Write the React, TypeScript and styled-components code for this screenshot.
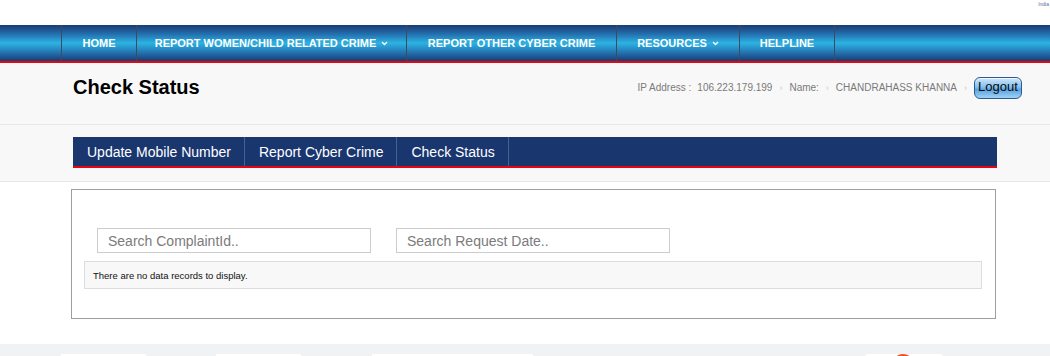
import React from "react";
import styled, { createGlobalStyle } from "styled-components";

const GlobalStyle = createGlobalStyle`
  html, body {
    margin: 0;
    padding: 0;
    background: #ffffff;
    font-family: "Liberation Sans", Arial, sans-serif;
  }
`;

const Page = styled.div`
  width: 1050px;
  height: 356px;
  overflow: hidden;
`;

const TopStrip = styled.div`
  height: 25px;
  display: flex;
  justify-content: flex-end;
  align-items: flex-start;
`;

const TinyLabel = styled.span`
  font-size: 5px;
  line-height: 8px;
  color: #5a6f95;
  margin-right: 1px;
`;

const NavBar = styled.nav`
  height: 36px;
  border-bottom: 2px solid #e30613;
  background: linear-gradient(
    to bottom,
    #1c3a72 0%,
    #236fae 25%,
    #2cb3e3 50%,
    #236fae 78%,
    #1c3a72 100%
  );
  display: flex;
  padding-left: 61px;
`;

const NavItem = styled.a<{ $w: number; $last?: boolean }>`
  display: flex;
  align-items: center;
  justify-content: center;
  gap: 5px;
  width: ${(p) => p.$w}px;
  box-sizing: border-box;
  border-left: 1px solid #3d4b5f;
  border-right: ${(p) => (p.$last ? "1px solid #3d4b5f" : "none")};
  color: #ffffff;
  font-size: 11px;
  font-weight: bold;
  text-transform: uppercase;
  text-decoration: none;
  white-space: nowrap;
`;

const Chevron = () => (
  <svg width="7" height="5" viewBox="0 0 7 5">
    <polyline
      points="1,1 3.5,3.5 6,1"
      fill="none"
      stroke="#ffffff"
      strokeWidth="1.3"
    />
  </svg>
);

const HeaderBand = styled.div`
  background: #f8f8f8;
  border-bottom: 1px solid #e8e8e8;
  height: 61px;
`;

const HeaderInner = styled.div`
  height: 49px;
  display: flex;
  align-items: center;
  justify-content: space-between;
  padding: 0 28px 0 73px;
`;

const Title = styled.h1`
  margin: 0;
  font-size: 20px;
  font-weight: bold;
  color: #000000;
`;

const UserInfo = styled.div`
  display: flex;
  align-items: center;
  font-size: 10px;
  color: #7a7a7a;
`;

const InfoText = styled.span<{ $gap?: number }>`
  margin-left: ${(p) => p.$gap ?? 0}px;
`;

const Sep = styled.span`
  color: #c8c8c8;
  font-size: 9px;
  margin: 0 7px;
`;

const LogoutButton = styled.button`
  width: 48px;
  height: 22px;
  padding: 0 0 2px;
  border: 1px solid #2a5a94;
  border-radius: 6px;
  background: linear-gradient(to bottom, #cfe7fa 0%, #86c0ee 45%, #5aa3e2 58%, #9fd2f5 100%);
  box-shadow: inset 0 1px 0 rgba(255, 255, 255, 0.7);
  font-family: "Liberation Sans", Arial, sans-serif;
  font-size: 13px;
  color: #0a0a0a;
`;

const TabBand = styled.div`
  background: #f8f8f8;
  border-bottom: 1px solid #e8e8e8;
  padding: 12px 0 13px 73px;
`;

const TabBar = styled.div`
  width: 924px;
  height: 29px;
  background: #1a366f;
  border-bottom: 2px solid #e30613;
  display: flex;
`;

const Tab = styled.a`
  display: flex;
  align-items: center;
  padding: 0 13px 0 14px;
  border-right: 1px solid #48608e;
  color: #ffffff;
  font-size: 14px;
  text-decoration: none;
  white-space: nowrap;
`;

const Main = styled.main`
  padding: 7px 0 0 71px;
`;

const Panel = styled.section`
  width: 925px;
  height: 130px;
  box-sizing: border-box;
  border: 1px solid #9e9e9e;
  padding: 38px 13px 0 12px;
`;

const SearchRow = styled.div`
  display: flex;
  gap: 25px;
  padding-left: 13px;
`;

const SearchInput = styled.input`
  width: 274px;
  height: 25px;
  box-sizing: border-box;
  border: 1px solid #cccccc;
  padding: 0 10px;
  font-family: "Liberation Sans", Arial, sans-serif;
  font-size: 14px;
  color: #333333;
  outline: none;
  &::placeholder {
    color: #7b7b7b;
  }
`;

const EmptyRow = styled.div`
  margin-top: 8px;
  width: 898px;
  height: 28px;
  box-sizing: border-box;
  background: #f8f8f8;
  border: 1px solid #dddddd;
  display: flex;
  align-items: center;
  padding-left: 8px;
  font-size: 9.5px;
  color: #111111;
`;

const Footer = styled.footer`
  margin-top: 25px;
  height: 20px;
  background: #f1f2f4;
  display: flex;
  align-items: flex-start;
  padding: 10px 0 0 61px;
  box-sizing: border-box;
`;

const LogoSlot = styled.div<{ $w: number; $ml: number }>`
  width: ${(p) => p.$w}px;
  height: 20px;
  margin-left: ${(p) => p.$ml}px;
  background: #ffffff;
  position: relative;
  overflow: hidden;
`;

const OrangeMark = styled.div`
  position: absolute;
  top: 0;
  left: 26px;
  width: 22px;
  height: 22px;
  border-radius: 50%;
  background: radial-gradient(circle at 50% 30%, #ff5a1f 0%, #e8380c 70%);
`;

const navItems = [
  { label: "Home", w: 75 },
  { label: "Report Women/Child Related Crime", w: 270, drop: true },
  { label: "Report Other Cyber Crime", w: 210 },
  { label: "Resources", w: 123, drop: true },
  { label: "Helpline", w: 96 },
];

const tabs = ["Update Mobile Number", "Report Cyber Crime", "Check Status"];

export default function App() {
  return (
    <Page>
      <GlobalStyle />
      <TopStrip>
        <TinyLabel>India</TinyLabel>
      </TopStrip>
      <NavBar>
        {navItems.map((item, i) => (
          <NavItem key={item.label} $w={item.w} $last={i === navItems.length - 1}>
            {item.label}
            {item.drop ? <Chevron /> : null}
          </NavItem>
        ))}
      </NavBar>
      <HeaderBand>
        <HeaderInner>
          <Title>Check Status</Title>
          <UserInfo>
            <InfoText>IP Address :</InfoText>
            <InfoText $gap={6}>106.223.179.199</InfoText>
            <Sep>›</Sep>
            <InfoText>Name:</InfoText>
            <Sep>›</Sep>
            <InfoText>CHANDRAHASS KHANNA</InfoText>
            <Sep>›</Sep>
            <LogoutButton>Logout</LogoutButton>
          </UserInfo>
        </HeaderInner>
      </HeaderBand>
      <TabBand>
        <TabBar>
          {tabs.map((t) => (
            <Tab key={t}>{t}</Tab>
          ))}
        </TabBar>
      </TabBand>
      <Main>
        <Panel>
          <SearchRow>
            <SearchInput placeholder="Search ComplaintId.." />
            <SearchInput placeholder="Search Request Date.." />
          </SearchRow>
          <EmptyRow>There are no data records to display.</EmptyRow>
        </Panel>
      </Main>
      <Footer>
        <LogoSlot $w={85} $ml={0} />
        <LogoSlot $w={85} $ml={70} />
        <LogoSlot $w={161} $ml={71} />
        <LogoSlot $w={76} $ml={333}>
          <OrangeMark />
        </LogoSlot>
      </Footer>
    </Page>
  );
}
